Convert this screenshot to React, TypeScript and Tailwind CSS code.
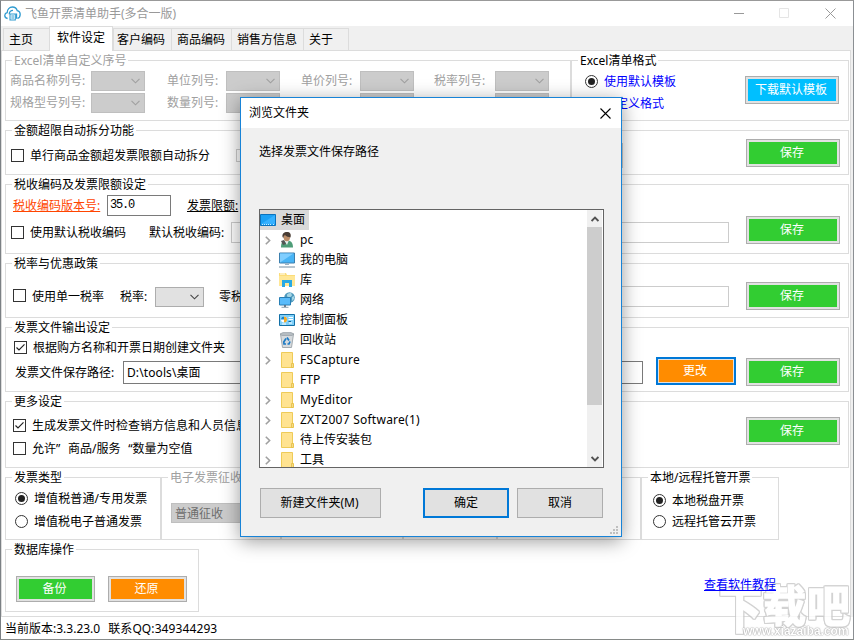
import React from 'react';
import clsx from 'clsx';

const Group: React.FC<{
  title?: string;
  className?: string;
  disabled?: boolean;
  children?: React.ReactNode;
}> = ({ title, className, disabled, children }) => (
  <fieldset className={clsx('shrink-0 border border-[#dcdcdc]', disabled && 'text-[#a0a0a0]', className)}>
    <legend className="ml-[6px] h-4 px-[2px] leading-[18px] whitespace-nowrap">{title || '\u00a0'}</legend>
    {children}
  </fieldset>
);

const CheckBox: React.FC<{ checked?: boolean; disabled?: boolean }> = ({ checked, disabled }) => (
  <span
    className={clsx(
      'flex h-[13px] w-[13px] shrink-0 items-center justify-center border bg-white',
      disabled ? 'border-[#cccccc]' : 'border-[#333333]'
    )}
  >
    {checked && (
      <svg width="11" height="11" viewBox="0 0 11 11" fill="none" stroke="#222" strokeWidth="1.2">
        <path d="M1.5 5.5 4 8 9.5 2.3" />
      </svg>
    )}
  </span>
);

const Radio: React.FC<{ checked?: boolean }> = ({ checked }) => (
  <span className="flex h-[13px] w-[13px] shrink-0 items-center justify-center rounded-full border border-[#333333] bg-white">
    {checked && <span className="h-[7px] w-[7px] rounded-full bg-[#222222]" />}
  </span>
);

const Combo: React.FC<{ className?: string; disabled?: boolean; text?: string }> = ({ className, disabled, text }) => (
  <span
    className={clsx(
      'flex h-5 shrink-0 items-center justify-end border pr-1 pl-[3px]',
      disabled ? 'border-[#bfbfbf] bg-[#cccccc]' : 'border-[#adadad] bg-[#e1e1e1]',
      className
    )}
  >
    {text && <span className="flex-1 pt-px text-[#6d6d6d]">{text}</span>}
    <svg width="9" height="6" viewBox="0 0 9 6" fill="none" stroke={disabled ? '#a0a0a0' : '#444'} strokeWidth="1.1">
      <path d="M.5 .8 4.5 4.8 8.5 .8" />
    </svg>
  </span>
);

const ColorButton: React.FC<{ label: string; className?: string }> = ({ label, className }) => (
  <button className={clsx('shrink-0 border border-[#adadad] bg-[#e1e1e1] p-[2px] text-white', className)}>
    <span className="flex h-full items-center justify-center pr-[2px]">{label}</span>
  </button>
);

const SaveButton: React.FC<{ className?: string }> = ({ className }) => (
  <ColorButton label="保存" className={clsx('mr-2 h-7 w-[94px] *:bg-[#32cd32]', className)} />
);

const AppIcon = () => (
  <svg width="17" height="15" viewBox="0 0 17 15" fill="none" stroke="#2f9bd0" strokeWidth="1.3">
    <path d="M3.6 12.5C1.4 12.2.7 10.6.8 9.2.9 7.700 2 6.800 3.200 6.600 3.200 3.400 5.400 1 8.400 1c2.500 0 4.200 1.500 4.800 3.600 2 .4 3 1.800 3 3.600 0 2.300-1.200 3.800-2.800 4.200" />
    <path d="M5.200 8.200C5.400 6 6.800 4.500 9 4.400M12.500 7.500v5.300" />
    <path d="M6 8h5.300v6H6zM7.300 10H10M7.300 12H10" strokeWidth="1.1" />
  </svg>
);

const tabs = [
  { label: '主页', style: 'w-[46px] pl-[5px]' },
  { label: '软件设定', active: true, style: 'w-[64px] pl-[7px]' },
  { label: '客户编码', style: 'w-[58px] pl-[3px]' },
  { label: '商品编码', style: 'w-[60px] pl-[5px]' },
  { label: '销售方信息', style: 'w-[72px] pl-[5px]' },
  { label: '关于', style: 'w-[46px] border-r pl-[5px]' },
];

const columnRows = [
  ['商品名称列号:', '单位列号:', '单价列号:', '税率列号:'],
  ['规格型号列号:', '数量列号:', '', ''],
];

const columnStyles = ['ml-1 w-[81px]', 'ml-[22px] w-[59px]', 'ml-[21px] w-[59px]', 'ml-5 w-[61px]'];

const MainTab = () => (
  <div className="mr-[2px] flex h-[567px] flex-col gap-px border border-[#dcdcdc] bg-white pt-px pl-[3px]">
    <div className="flex">
      <Group title="Excel清单自定义序号" disabled className="h-[69px] w-[566px]">
        <div className="mt-[3px] flex flex-col gap-[2px]">
          {columnRows.map((row, i) => (
            <div key={i} className="flex items-center">
              {row.map((label, j) => (
                <React.Fragment key={j}>
                  <span className={clsx('whitespace-nowrap', columnStyles[j])}>{label}</span>
                  <Combo disabled className="w-[54px]" />
                </React.Fragment>
              ))}
            </div>
          ))}
        </div>
      </Group>
      <Group title="Excel清单格式" className="h-[69px] w-[278px]">
        <div className="flex">
          <div className="mt-[3px] ml-[13px] flex flex-1 flex-col gap-[2px] text-[#0000ff]">
            <label className="flex h-5 items-center gap-[6px]">
              <Radio checked />
              <span className="pt-[2px]">使用默认模板</span>
            </label>
            <label className="flex h-5 items-center gap-[6px]">
              <Radio />
              <span className="pt-[2px]">自定义格式</span>
            </label>
          </div>
          <ColorButton label="下载默认模板" className="mt-2 mr-[9px] h-7 w-[94px] *:bg-[#00bfff]" />
        </div>
      </Group>
    </div>

    <Group title="金额超限自动拆分功能" className="h-[53px] w-[844px]">
      <div className="flex">
        <div className="mt-[5px] ml-[5px] flex h-[25px] flex-1 items-center">
          <CheckBox />
          <span className="ml-[6px] w-[206px]">单行商品金额超发票限额自动拆分</span>
          <CheckBox disabled />
          <span className="ml-[74px] h-[25px] w-[300px] border border-[#cccccc]" />
        </div>
        <SaveButton className="mt-px" />
      </div>
    </Group>

    <Group title="税收编码及发票限额设定" className="h-[78px] w-[844px]">
      <div className="flex">
        <div className="mt-[3px] flex-1">
          <div className="flex h-[21px] items-center">
            <span className="ml-[7px] w-[94px] text-[#ff4500] underline">税收编码版本号:</span>
            <span className="h-[21px] w-[64px] border border-[#7a7a7a] pl-[2px] font-['Liberation_Mono',monospace] text-[12px] leading-[18px] tracking-[-1.2px]">35.0</span>
            <span className="ml-4 underline">发票限额:</span>
          </div>
          <div className="mt-[6px] flex h-[21px] items-center">
            <span className="mb-px ml-[5px]"><CheckBox /></span>
            <span className="ml-[6px] w-[119px]">使用默认税收编码</span>
            <span className="w-[82px]">默认税收编码:</span>
            <span className="h-[21px] w-[498px] border border-[#cccccc]" />
          </div>
        </div>
        <SaveButton className="mt-6" />
      </div>
    </Group>

    <Group title="税率与优惠政策" className="h-[63px] w-[844px]">
      <div className="flex">
        <div className="mt-[15px] flex h-[21px] flex-1 items-center">
          <span className="mb-[2px] ml-[7px]"><CheckBox /></span>
          <span className="ml-[6px] w-[88px]">使用单一税率</span>
          <span className="w-[35px]">税率:</span>
          <Combo className="w-[49px]" />
          <span className="ml-[15px] w-[110px]">零税率标识:</span>
          <span className="h-[21px] w-[400px] border border-[#cccccc]" />
        </div>
        <SaveButton className="mt-[11px]" />
      </div>
    </Group>

    <Group title="发票文件输出设定" className="h-[73px] w-[844px]">
      <div className="flex">
        <div className="flex-1">
          <div className="mt-[3px] ml-2 flex h-5 items-center gap-[6px]">
            <span className="mb-px"><CheckBox checked /></span>
            根据购方名称和开票日期创建文件夹
          </div>
          <div className="mt-[3px] ml-[9px] flex h-[23px] items-center">
            <span className="w-[108px]">发票文件保存路径:</span>
            <span className="flex h-[23px] w-[520px] items-center border border-[#7a7a7a] pl-[3px] tracking-[0.1px]">D:\tools\桌面</span>
          </div>
        </div>
        <button className="mt-[22px] mr-[10px] h-7 w-20 border-2 border-[#0078d7] bg-[#e1e1e1] p-px text-white">
          <span className="flex h-full items-center justify-center bg-[#ff8c00] pr-[2px]">更改</span>
        </button>
        <SaveButton className="mt-[23px]" />
      </div>
    </Group>

    <Group title="更多设定" className="h-[75px] w-[844px]">
      <div className="flex">
        <div className="mt-[5px] ml-[7px] flex-1">
          <div className="flex h-[23px] items-center gap-[6px]">
            <CheckBox checked />
            生成发票文件时检查销方信息和人员信息
          </div>
          <div className="flex h-[23px] items-center gap-[6px]">
            <CheckBox />
            <span>允许<span className="inline-block w-3">”</span>商品/服务<span className="inline-block w-3 text-right">“</span>数量为空值</span>
          </div>
        </div>
        <SaveButton className="mt-2" />
      </div>
    </Group>

    <div className="flex">
      <Group title="发票类型" className="h-[71px] w-[156px]">
        <div className="mt-[2px] ml-[9px]">
          <label className="flex h-[23px] items-center gap-[6px]">
            <Radio checked />
            <span className="tracking-[0.1px]">增值税普通/专用发票</span>
          </label>
          <label className="flex h-[23px] items-center gap-[6px]">
            <Radio />
            <span>增值税电子普通发票</span>
          </label>
        </div>
      </Group>
      <Group title="电子发票征收方式" disabled className="h-[71px] w-[120px]">
        <Combo disabled text="普通征收" className="mt-[18px] ml-[9px] w-[100px]" />
      </Group>
      <Group className="h-[71px] w-[122px]" />
      <Group className="h-[71px] w-[94px]" />
      <Group className="h-[71px] w-[144px]" />
      <Group title="本地/远程托管开票" className="h-[71px] w-[138px]">
        <div className="mt-[5px] ml-[11px]">
          <label className="flex h-[21px] items-center gap-[6px]"><Radio checked />本地税盘开票</label>
          <label className="flex h-[21px] items-center gap-[6px]"><Radio />远程托管云开票</label>
        </div>
      </Group>
    </div>

    <div className="flex">
      <Group title="数据库操作" className="h-[71px] w-[194px]">
        <div className="mt-[19px] ml-[10px] flex gap-[13px]">
          <ColorButton label="备份" className="h-[26px] w-[79px] *:bg-[#32cd32]" />
          <ColorButton label="还原" className="h-[26px] w-[79px] *:bg-[#ff8c00]" />
        </div>
      </Group>
      <a className="relative z-10 mt-[35px] ml-[505px] h-[18px] text-[#0000ff] underline">查看软件教程</a>
    </div>
  </div>
);

const FolderIcon = () => (
  <svg width="16" height="16" viewBox="0 0 16 16">
    <path d="M2.500 .5h11v11h1v4h-12z" fill="#ffe391" stroke="#eecb58" />
    <path d="M12.500 15.500v-4h1.500v4z" fill="#fff0b8" stroke="#e3bb3f" strokeWidth=".8" />
  </svg>
);

const DesktopIcon = () => (
  <svg width="16" height="12" viewBox="0 0 16 12">
    <path d="M.5 .5h15v11H.5z" fill="#1ba1f5" stroke="#0a72bd" />
    <path d="M1 10 15 1v9z" fill="#35b1ff" />
    <path d="M2 10.500h1M4 10.500h8M13 10.500h1" stroke="#c9ecff" strokeDasharray="1 1" />
  </svg>
);

const UserIcon = () => (
  <svg width="16" height="16" viewBox="0 0 16 16">
    <path d="M2 15.500c0-4 1-7 4.500-7h2c3.500 0 5.500 2.500 5.500 7z" fill="#4f9d78" />
    <path d="M5 8h5l-2 5z" fill="#e9eef0" />
    <ellipse cx="7.800" cy="5.300" rx="3.200" ry="3.900" fill="#bb8d68" />
    <path d="M3.500 5C3 1.500 5 0 8 0s4.500 2 3.500 5.500C10 5 7 4.500 6 3 5 4 4.500 4 4.500 6z" fill="#493d34" />
    <path d="m2 9 3-1 2 4-3 1z" fill="#555" />
  </svg>
);

const ComputerIcon = () => (
  <svg width="16" height="16" viewBox="0 0 16 16">
    <path d="M.5 1h15v10H.5z" fill="#48b4f5" stroke="#3c7fae" />
    <path d="M1 10.500 14.500 1.500H1z" fill="#80ceff" />
    <path d="M6 11.500h4v1.500H6z" fill="#9ab3c4" />
    <path d="M0 15h16" stroke="#94a8b6" strokeWidth="1.300" />
  </svg>
);

const LibraryIcon = () => (
  <svg width="16" height="16" viewBox="0 0 16 16">
    <path d="M0 1h7l1 2h8v11H0z" fill="#fbdc79" />
    <path d="M0 4h16v10H0z" fill="#ffe796" />
    <path d="M1 2h5" stroke="#fff" />
    <path d="M3 15V8h10v7h-3v-4H6v4z" fill="#28a9e4" />
  </svg>
);

const NetworkIcon = () => (
  <svg width="16" height="16" viewBox="0 0 16 16">
    <circle cx="10.500" cy="5.500" r="5.300" fill="#4e99bd" />
    <path d="M8 2.500c2-2 3-1 4-2l1 3-2 2-3-1M13 5l2-1v3l-2 2z" fill="#a5d5e4" />
    <path d="M.5 5.500h11v7.500H.5z" fill="#59bbfa" stroke="#287fb5" />
    <path d="M5 13h2v2H5z" fill="#678" />
    <path d="M2.500 15.300h7" stroke="#8ba0ad" />
  </svg>
);

const ControlPanelIcon = () => (
  <svg width="16" height="14" viewBox="0 0 16 14">
    <path d="M.5 1.500h15v11H.5z" fill="#7fd0fa" stroke="#126fa6" />
    <circle cx="5" cy="6.500" r="3" fill="#fff" />
    <path d="M5 6.500v-3a3 3 0 0 1 0 6z" fill="#f3aa27" />
    <path d="M5 6.500v-3a3 3 0 0 0-3 3z" fill="#1684cb" />
    <path d="M9.500 4.500H14M9.500 6.500H14M3 11h4M10 10h3" stroke="#fff" />
    <path d="M9.500 8.500H12" stroke="#13659c" />
  </svg>
);

const RecycleIcon = () => (
  <svg width="16" height="16" viewBox="0 0 16 16">
    <path d="m1.500 2 2 13.500h9l2-13.500z" fill="#d6dadd" stroke="#a3aaaf" />
    <path d="M1 2 4 .5h8L15 2l-2 1.500H3z" fill="#b5bcc1" stroke="#8e979d" strokeWidth=".6" />
    <path d="m8 5.500 2 3M11 9.500l-1 2.500H8.500M7 12H5l-.2-2L7 6.500" fill="none" stroke="#1c7ac4" strokeWidth="1.700" />
  </svg>
);

const treeItems = [
  { label: 'pc', icon: UserIcon, expandable: true },
  { label: '我的电脑', icon: ComputerIcon, expandable: true },
  { label: '库', icon: LibraryIcon, expandable: true },
  { label: '网络', icon: NetworkIcon, expandable: true },
  { label: '控制面板', icon: ControlPanelIcon, expandable: true },
  { label: '回收站', icon: RecycleIcon },
  { label: 'FSCapture', icon: FolderIcon, expandable: true, latin: true },
  { label: 'FTP', icon: FolderIcon },
  { label: 'MyEditor', icon: FolderIcon, expandable: true, latin: true },
  { label: 'ZXT2007 Software(1)', icon: FolderIcon, expandable: true, latin: true },
  { label: '待上传安装包', icon: FolderIcon, expandable: true },
  { label: '工具', icon: FolderIcon, expandable: true },
];

const FolderTree = () => (
  <div className="flex h-[259px] w-[345px] overflow-hidden border border-[#646464] bg-white pr-px">
    <div className="flex-1">
      <div className="flex h-5 w-[49px] items-center gap-[5px] bg-[#d9d9d9]">
        <DesktopIcon />
        桌面
      </div>
      {treeItems.map(({ label, icon: Icon, expandable, latin }) => (
        <div key={label} className="flex h-5 items-center">
          <span className="ml-[5px] w-[14px]">
            {expandable && (
              <svg width="6" height="9" viewBox="0 0 6 9" fill="none" stroke="#a0a0a0" strokeWidth="1.6">
                <path d="M.8 .8 4.600 4.500 .8 8.200" />
              </svg>
            )}
          </span>
          <Icon />
          <span className={clsx('ml-[5px] whitespace-nowrap', latin && 'tracking-[0.25px]')}>{label}</span>
        </div>
      ))}
    </div>
    <div className="flex h-[257px] w-[15px] flex-col items-center bg-[#f0f0f0]">
      <span className="flex h-[17px] shrink-0 items-center">
        <svg width="8" height="6" viewBox="0 0 8 6" fill="none" stroke="#505050" strokeWidth="1.800">
          <path d="M.6 5 4 1.600 7.400 5" />
        </svg>
      </span>
      <span className="h-[178px] w-full shrink-0 bg-[#cdcdcd]" />
      <span className="mt-auto flex h-[17px] shrink-0 items-center">
        <svg width="8" height="6" viewBox="0 0 8 6" fill="none" stroke="#505050" strokeWidth="1.800">
          <path d="M.6 1 4 4.400 7.400 1" />
        </svg>
      </span>
    </div>
  </div>
);

const BrowseDialog = () => (
  <div className="absolute top-[96px] left-[239px] z-20 flex h-[440px] w-[382px] flex-col border border-[#1883d7] bg-[#f0f0f0] shadow-[0_4px_18px_rgba(0,0,0,0.4)]">
    <div className="flex h-[30px] items-center justify-between bg-white pr-[10px] pl-2">
      <span>浏览文件夹</span>
      <svg width="11" height="11" viewBox="0 0 11 11" stroke="#000" strokeWidth="1.1">
        <path d="M.5 .5 10.500 10.500M10.500 .5 .5 10.500" />
      </svg>
    </div>
    <p className="mt-[15px] ml-[18px] h-[18px] leading-[18px]">选择发票文件保存路径</p>
    <div className="mt-12 ml-[18px]">
      <FolderTree />
    </div>
    <div className="mt-5 ml-[19px] flex">
      <button className="h-[30px] w-[121px] border border-[#adadad] bg-[#e1e1e1] pr-[2px]">新建文件夹(M)</button>
      <button className="ml-[42px] h-[30px] w-[86px] border-2 border-[#0078d7] bg-[#e1e1e1]">确定</button>
      <button className="ml-2 h-[30px] w-[86px] border border-[#adadad] bg-[#e1e1e1]">取消</button>
    </div>
    <svg className="mt-auto mr-[3px] mb-[2px] self-end" width="8" height="8" viewBox="0 0 8 8" fill="#bfbfbf">
      <path d="M6 0h2v2H6zM3 3h2v2H3zM6 3h2v2H6zM0 6h2v2H0zM3 6h2v2H3zM6 6h2v2H6z" />
    </svg>
  </div>
);

const Watermark = () => (
  <div className="absolute right-0 bottom-0 h-[58px] w-[134px] opacity-80">
    <div className="flex gap-[1px] text-[43px] leading-[50px] font-bold whitespace-nowrap text-white [-webkit-text-stroke:1.5px_#ffffff] [filter:drop-shadow(1px_0_0_#c8c8c8)_drop-shadow(-1px_0_0_#c8c8c8)_drop-shadow(0_1px_0_#c8c8c8)_drop-shadow(0_-1px_0_#c8c8c8)]">
      <span className="origin-top scale-y-[1.15]">下</span>
      <span>载</span>
      <span>吧</span>
    </div>
    <div className="absolute top-[43px] left-[24px] font-['Liberation_Sans',sans-serif] text-[12px] leading-[15px] font-bold text-white [text-shadow:0_0_1px_#888,0_0_1px_#999,0_0_2px_#aaa]">
      www.xiazaiba.com
    </div>
  </div>
);

export default function App() {
  return (
    <div className="relative flex h-[640px] w-[854px] flex-col overflow-hidden border border-t-[#999999] border-r-[#8b8f93] border-b-[#868a88] border-l-[#7b8084] bg-[#f0f0f0] font-['Noto_Sans','Noto_Sans_CJK_SC',sans-serif] text-[12px] leading-[18px] text-black">
      <div className="flex h-[25px] shrink-0 items-center bg-white pl-[3px] text-[#999999]">
        <AppIcon />
        <span className="ml-[4px] flex-1">飞鱼开票清单助手(多合一版)</span>
        <svg className="mr-[17px]" width="102" height="11" viewBox="0 0 102 11" fill="none" stroke="#999">
          <path d="M0 5.500h10M91.500 .5 101.500 10.500M101.500 .5 91.500 10.500" />
          <path d="M45.500 .5h9v9h-9z" stroke="#e5e5e5" />
        </svg>
      </div>
      <div className="flex h-6 shrink-0 items-end pl-[2px]">
        {tabs.map((tab) => (
          <div
            key={tab.label}
            className={clsx(
              'border-t border-l border-[#dcdcdc] whitespace-nowrap',
              tab.active ? 'relative -mb-px h-[25px] border-r bg-white pt-[2px]' : 'h-[22px] pt-[2px]',
              tab.style
            )}
          >
            {tab.label}
          </div>
        ))}
      </div>
      <MainTab />
      <div className="flex flex-1 items-center bg-white pt-[2px] pl-1 whitespace-pre">
        <span>当前版本:3.3.23.0</span>
        <span className="ml-2 tracking-[0.1px]">联系QQ:349344293</span>
      </div>
      <BrowseDialog />
      <Watermark />
    </div>
  );
}
